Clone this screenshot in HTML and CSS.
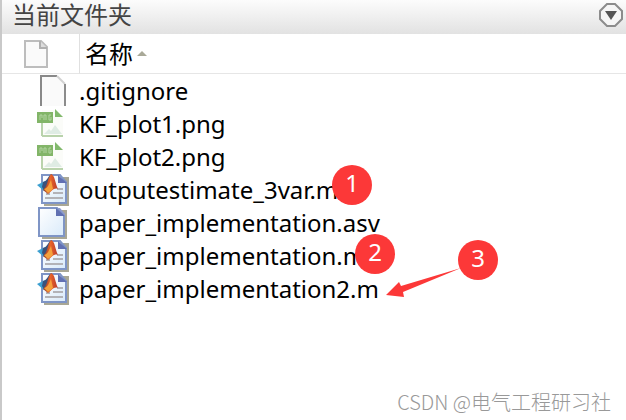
FILE: index.html
```
<!DOCTYPE html>
<html lang="zh-CN">
<head>
    <meta charset="UTF-8">
    <meta name="viewport" content="width=device-width, initial-scale=1.0">
    <title>当前文件夹</title>
    <link rel="stylesheet" href="styles.css">
</head>
<body>
    <svg class="symbols" aria-hidden="true">
        <defs>
            <linearGradient id="paper" x1="0" y1="0" x2="1" y2="1">
                <stop offset="0" stop-color="#ffffff"/>
                <stop offset="1" stop-color="#d9eafa"/>
            </linearGradient>
            <linearGradient id="flame" x1="0" y1="0" x2="1" y2="0">
                <stop offset="0" stop-color="#8c3a2a"/>
                <stop offset="0.5" stop-color="#e8642a"/>
                <stop offset="1" stop-color="#b8392b"/>
            </linearGradient>
        </defs>
        <symbol id="icon-page" viewBox="0 0 32 32">
            <path d="M5 3h25v29H5z" fill="#a9a795"/>
            <path d="M2 1h18l7 7v21H2z" fill="url(#paper)" stroke="#7f95c6" stroke-width="2"/>
            <path d="M19 1l9 8h-9z" fill="#6170b2"/>
            <path d="M21 1h2l5 6v2z" fill="#8f9bcd"/>
        </symbol>
        <symbol id="icon-matlab" viewBox="0 0 32 32">
            <path d="M7 3h25v29H7z" fill="#a9a795"/>
            <path d="M5 1h18l6 7v21H5z" fill="url(#paper)" stroke="#7f95c6" stroke-width="2"/>
            <path d="M21 1l9 8h-9z" fill="#6170b2"/>
            <path d="M20 15h6M9 20h4M16 19h10M8 24h18" stroke="#b3b3b8" stroke-width="2"/>
            <path d="M0 11l8-4 5 3-6 7z" fill="#3c9fd0"/>
            <path d="M6 8c5-1 5-7 9-8l-2 10-6 6-2-3z" fill="#3b527c"/>
            <path d="M14 0c4 1 4 9 7 15-4-2-7 3-10 5l-5-4c5-4 4-11 8-16z" fill="url(#flame)"/>
            <path d="M14 6l2 9-5 4-4-4c4-1 5-5 7-9z" fill="#f5a13c"/>
        </symbol>
        <symbol id="icon-png" viewBox="0 0 32 32">
            <path d="M5 2h14v6h7v20H5z" fill="#fbfcf9"/>
            <path d="M5 13v15M5 28h21" stroke="#b9d3ac" stroke-width="2"/>
            <path d="M18 1l8 8h-8z" fill="#82b96d"/>
            <path d="M7 26l5-5 2 2 4-6 7 9z" fill="#dfece4"/>
            <path d="M0 4h16v11H0z" fill="#82b568"/>
            <path d="M3 12V7h2v3M7 12V7h2v5M14 7h-2v5h2V9" fill="none" stroke="#b2d4a2"/>
        </symbol>
        <symbol id="icon-blank" viewBox="0 0 32 32">
            <path d="M4 31V1h17l7 8v22z" fill="#fafafa"/>
            <path d="M4 31V1h16" fill="none" stroke="#898989" stroke-width="2"/>
            <path d="M20 1l8 8" stroke="#d2d2d2" stroke-width="2"/>
            <path d="M28 9v22" stroke="#8c8c8c" stroke-width="2"/>
        </symbol>
    </svg>

    <main class="panel">
        <header class="panel-header">
            <h1 class="panel-title">当前文件夹</h1>
            <button class="menu-btn" type="button" aria-label="操作">
                <svg viewBox="0 0 24 24" width="24" height="24">
                    <path d="M8 1h8l7 7v8l-7 7H8l-7-7V8z" fill="#f6f6f6" stroke="#8c8c8c" stroke-width="2"/>
                    <path d="M6 8h12l-6 9z" fill="#555"/>
                </svg>
            </button>
        </header>

        <div class="browser">
            <table class="files">
                <thead>
                    <tr>
                        <th class="type-col" aria-label="类型">
                            <svg viewBox="0 0 26 30" width="26" height="30">
                                <path d="M2 2h16l6 6v20H2z" fill="#fafafa" stroke="#bdbdbd" stroke-width="2"/>
                                <path d="M17 2v7h7" fill="#ddd" stroke="#b0b0b0" stroke-width="2"/>
                            </svg>
                        </th>
                        <th class="name-col">
                            <button class="sort-btn" type="button">名称<span class="sort-arrow"></span></button>
                        </th>
                    </tr>
                </thead>
                <tbody>
                    <tr>
                        <td class="file-icon"><svg><use href="#icon-blank"/></svg></td>
                        <td class="file-name">.gitignore</td>
                    </tr>
                    <tr>
                        <td class="file-icon"><svg><use href="#icon-png"/></svg></td>
                        <td class="file-name">KF_plot1.png</td>
                    </tr>
                    <tr>
                        <td class="file-icon"><svg><use href="#icon-png"/></svg></td>
                        <td class="file-name">KF_plot2.png</td>
                    </tr>
                    <tr>
                        <td class="file-icon"><svg><use href="#icon-matlab"/></svg></td>
                        <td class="file-name">outputestimate_3var.m</td>
                    </tr>
                    <tr>
                        <td class="file-icon"><svg><use href="#icon-page"/></svg></td>
                        <td class="file-name">paper_implementation.asv</td>
                    </tr>
                    <tr>
                        <td class="file-icon"><svg><use href="#icon-matlab"/></svg></td>
                        <td class="file-name">paper_implementation.m</td>
                    </tr>
                    <tr>
                        <td class="file-icon"><svg><use href="#icon-matlab"/></svg></td>
                        <td class="file-name">paper_implementation2.m</td>
                    </tr>
                </tbody>
            </table>

            <!-- numbered markers over the list -->
            <span class="badge badge-1">1</span>
            <span class="badge badge-2">2</span>
            <span class="badge badge-3">3</span>
            <svg class="arrow" viewBox="0 0 76 32" width="76" height="32" aria-hidden="true">
                <path d="M0 27L13 14l2 4 60-18L17 24l1 5z" fill="#fc3838"/>
            </svg>
        </div>

        <footer class="watermark">CSDN @电气工程研习社</footer>
    </main>
</body>
</html>
```
FILE: styles.css
```
* {
    margin: 0;
    padding: 0;
    box-sizing: border-box;
}

body {
    font-family: "Noto Sans", "Noto Sans CJK SC", sans-serif;
    background: #fff;
    color: #000;
}

button {
    font: inherit;
    color: inherit;
    background: none;
    border: none;
    cursor: pointer;
}

svg {
    display: block;
}

.symbols {
    position: absolute;
    width: 0;
    height: 0;
}

.panel {
    display: flex;
    flex-direction: column;
    min-height: 100vh;
    border-left: 2px solid #c9c9c9;
}

.panel-header {
    display: flex;
    align-items: center;
    justify-content: space-between;
    height: 34px;
    padding: 0 3px 4px 10px;
    background: linear-gradient(#fcfcfc, #e2e2e2);
}

.panel-title {
    font-size: 24px;
    line-height: 32px;
    font-weight: 400;
    color: #444;
}

.browser {
    position: relative;
    flex: 1;
}

.files {
    width: 100%;
    border-collapse: separate;
    border-spacing: 0;
    table-layout: fixed;
}

.files th {
    height: 40px;
    border-bottom: 1px solid #e6e6e6;
    font-weight: 400;
    text-align: left;
}

.files .type-col {
    width: 77px;
    padding-left: 21px;
}

.files .name-col {
    padding-left: 5px;
    border-left: 1px solid #e0e0e0;
}

.sort-btn {
    display: flex;
    align-items: center;
    gap: 4px;
    font-size: 24px;
    line-height: 32px;
}

.sort-arrow {
    border: 5px solid transparent;
    border-top: 0;
    border-bottom-color: #a9a998;
}

.files td {
    height: 33px;
}

.file-icon {
    padding-left: 35px;
}

.file-icon svg {
    width: 32px;
    height: 32px;
}

.file-name {
    font-size: 24px;
    line-height: 32px;
    white-space: nowrap;
}

.badge {
    position: absolute;
    width: 40px;
    height: 40px;
    border-radius: 50%;
    background: #fc3838;
    color: #fff;
    font-size: 24px;
    line-height: 36px;
    text-align: center;
}

.badge-1 {
    left: 330px;
    top: 131px;
}

.badge-2 {
    left: 353px;
    top: 200px;
}

.badge-3 {
    left: 456px;
    top: 206px;
}

.arrow {
    position: absolute;
    left: 384px;
    top: 234px;
}

.watermark {
    padding: 0 15px 4px;
    font-family: "Noto Sans CJK SC", sans-serif;
    font-size: 20px;
    line-height: 28px;
    font-weight: 300;
    text-align: right;
    color: #999;
}
```
